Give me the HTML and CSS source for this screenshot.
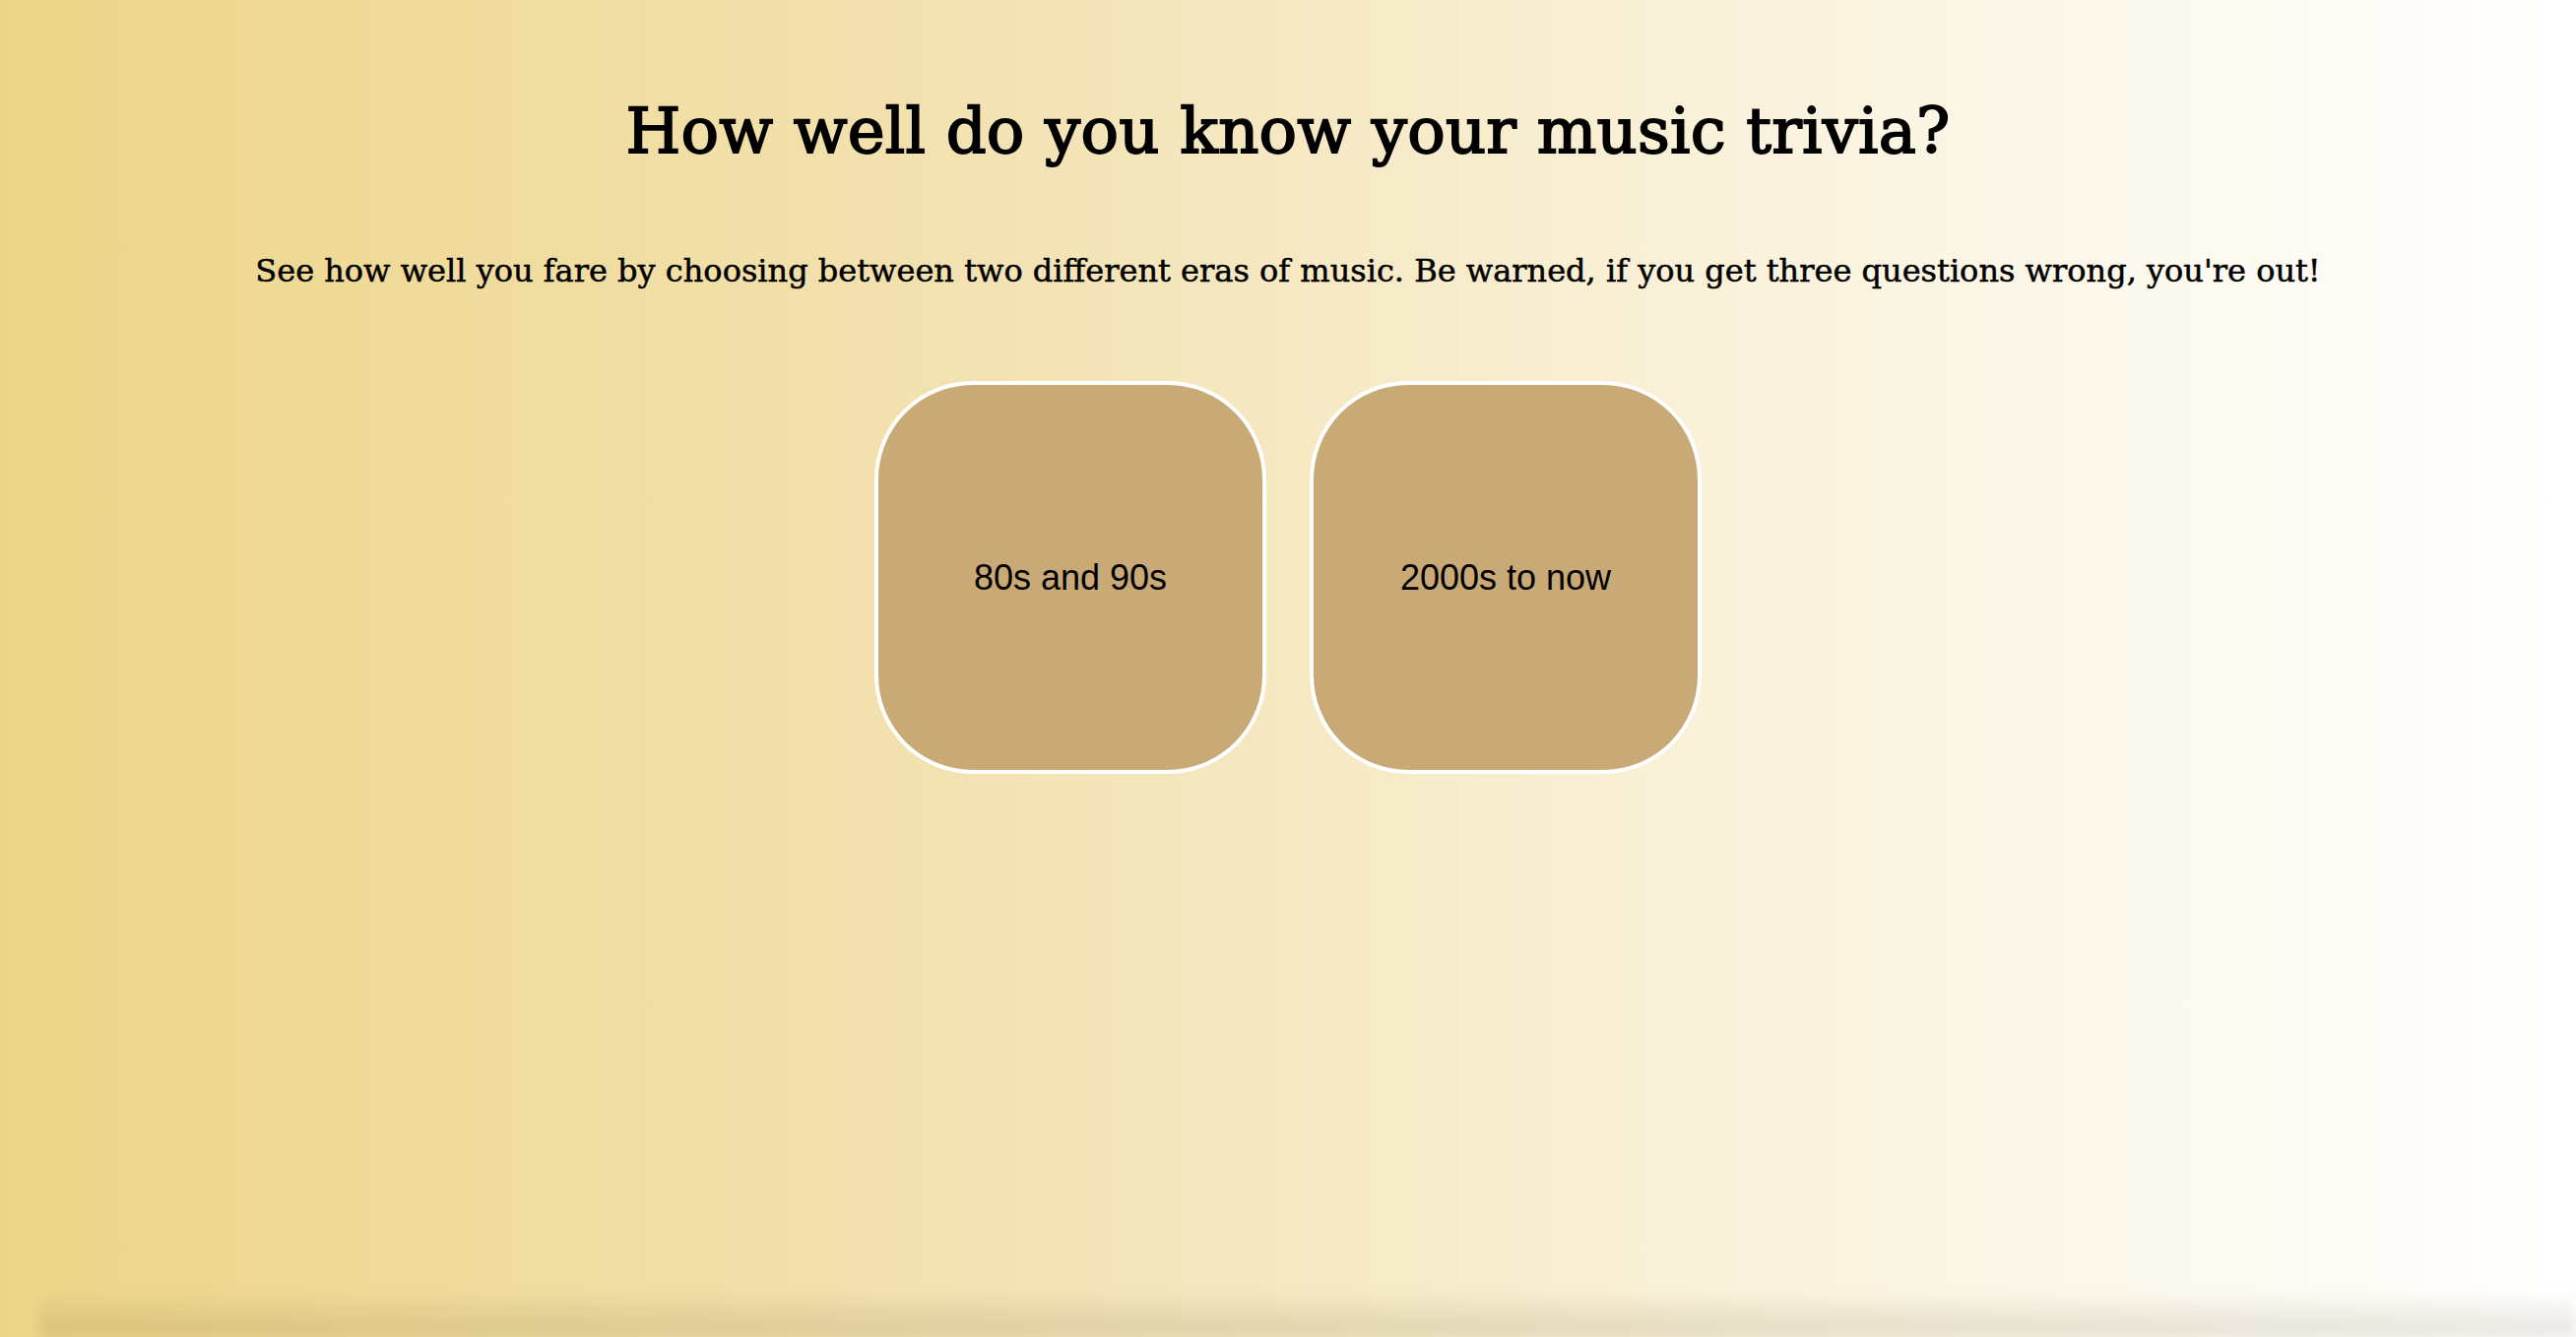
FILE: index.html
```
<!DOCTYPE html>
<html lang="en">
<head>
<meta charset="utf-8">
<title>Music Trivia</title>
<link rel="stylesheet" href="styles.css">
</head>
<body>
<main class="page">
  <h1 class="title">How well do you know your music trivia?</h1>
  <p class="intro">See how well you fare by choosing between two different eras of music. Be warned, if you get three questions wrong, you're out!</p>
  <div class="choices">
    <button class="choice">80s and 90s</button>
    <button class="choice">2000s to now</button>
  </div>
</main>
<div class="bottom-shade"></div>
</body>
</html>
```
FILE: styles.css
```
html, body {
  margin: 0;
  padding: 0;
  height: 100%;
}
body {
  background: linear-gradient(to right, #edd588 0%, #f3e3b5 40%, #faf3de 70%, #ffffff 100%);
  overflow: hidden;
}
.page {
  display: flex;
  flex-direction: column;
  align-items: center;
  padding-top: 93px;
}
.title {
  margin: 0;
  font-family: "DejaVu Serif", serif;
  font-weight: normal;
  font-size: 64px;
  line-height: 80px;
  letter-spacing: 0.2px;
  color: #000;
  -webkit-text-stroke: 1.8px #000;
}
.intro {
  margin: 82px 0 0;
  font-family: "DejaVu Serif", serif;
  font-size: 32px;
  line-height: 40px;
  color: #000;
  -webkit-text-stroke: 0.5px #000;
}
.choices {
  display: flex;
  gap: 44px;
  margin-top: 92px;
}
.choice {
  width: 398px;
  height: 399px;
  box-sizing: border-box;
  border: 4px solid #ffffff;
  border-radius: 100px;
  background: #c9aa76;
  font-family: "Liberation Sans", Arial, sans-serif;
  font-size: 36px;
  color: #000;
  padding: 0;
}
.bottom-shade {
  position: fixed;
  left: 40px;
  right: 0;
  bottom: 0;
  height: 48px;
  background: linear-gradient(to bottom, rgba(0,0,0,0) 0%, rgba(60,40,0,0.12) 100%);
  filter: blur(6px);
  pointer-events: none;
}
```
